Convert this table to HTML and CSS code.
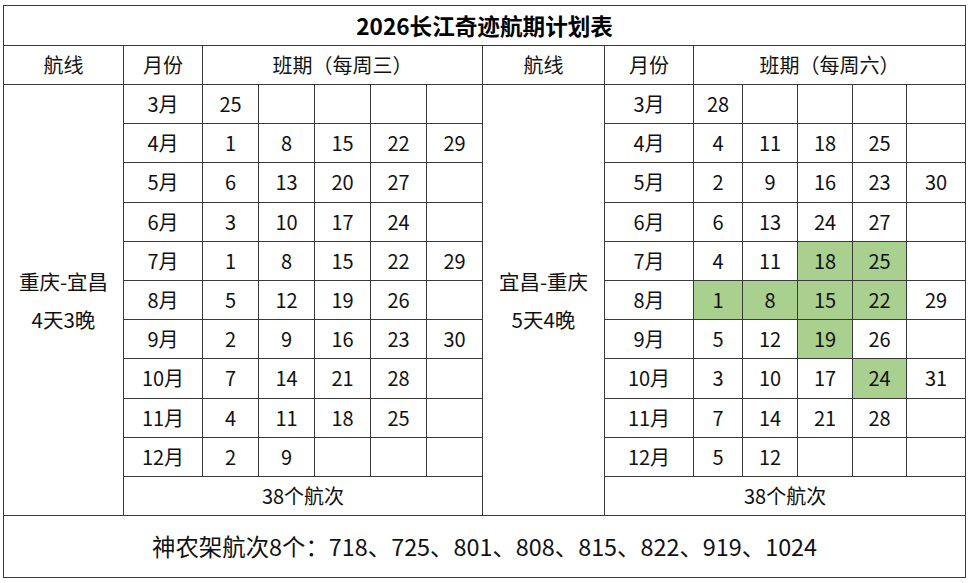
FILE: index.html
```html
<!DOCTYPE html>
<html lang="zh-CN">
<head>
<meta charset="utf-8">
<title>2026长江奇迹航期计划表</title>
<link rel="stylesheet" href="styles.css">
</head>
<body>
<table class="plan">
  <colgroup>
    <col class="c-route"><col class="c-month-l"><col class="c-d"><col class="c-d"><col class="c-d"><col class="c-d"><col class="c-d">
    <col class="c-route-r"><col class="c-month-r"><col class="c-r1"><col class="c-r2"><col class="c-r3"><col class="c-r4"><col class="c-r5">
  </colgroup>
  <tr class="r-title"><td colspan="14" class="title">2026长江奇迹航期计划表</td></tr>
  <tr class="r-head">
    <td>航线</td><td>月份</td><td colspan="5">班期（每周三）</td>
    <td>航线</td><td>月份</td><td colspan="5">班期（每周六）</td>
  </tr>
  <tr class="r-m">
    <td rowspan="11" class="route">重庆-宜昌<br>4天3晚</td>
    <td>3月</td><td>25</td><td></td><td></td><td></td><td></td>
    <td rowspan="11" class="route">宜昌-重庆<br>5天4晚</td>
    <td>3月</td><td>28</td><td></td><td></td><td></td><td></td>
  </tr>
  <tr class="r-m">
    <td>4月</td><td>1</td><td>8</td><td>15</td><td>22</td><td>29</td>
    <td>4月</td><td>4</td><td>11</td><td>18</td><td>25</td><td></td>
  </tr>
  <tr class="r-m">
    <td>5月</td><td>6</td><td>13</td><td>20</td><td>27</td><td></td>
    <td>5月</td><td>2</td><td>9</td><td>16</td><td>23</td><td>30</td>
  </tr>
  <tr class="r-m">
    <td>6月</td><td>3</td><td>10</td><td>17</td><td>24</td><td></td>
    <td>6月</td><td>6</td><td>13</td><td>24</td><td>27</td><td></td>
  </tr>
  <tr class="r-m">
    <td>7月</td><td>1</td><td>8</td><td>15</td><td>22</td><td>29</td>
    <td>7月</td><td>4</td><td>11</td><td class="hl">18</td><td class="hl">25</td><td></td>
  </tr>
  <tr class="r-m">
    <td>8月</td><td>5</td><td>12</td><td>19</td><td>26</td><td></td>
    <td>8月</td><td class="hl">1</td><td class="hl">8</td><td class="hl">15</td><td class="hl">22</td><td>29</td>
  </tr>
  <tr class="r-m">
    <td>9月</td><td>2</td><td>9</td><td>16</td><td>23</td><td>30</td>
    <td>9月</td><td>5</td><td>12</td><td class="hl">19</td><td>26</td><td></td>
  </tr>
  <tr class="r-m">
    <td>10月</td><td>7</td><td>14</td><td>21</td><td>28</td><td></td>
    <td>10月</td><td>3</td><td>10</td><td>17</td><td class="hl">24</td><td>31</td>
  </tr>
  <tr class="r-m">
    <td>11月</td><td>4</td><td>11</td><td>18</td><td>25</td><td></td>
    <td>11月</td><td>7</td><td>14</td><td>21</td><td>28</td><td></td>
  </tr>
  <tr class="r-m">
    <td>12月</td><td>2</td><td>9</td><td></td><td></td><td></td>
    <td>12月</td><td>5</td><td>12</td><td></td><td></td><td></td>
  </tr>
  <tr class="r-sum">
    <td colspan="6">38个航次</td>
    <td colspan="6">38个航次</td>
  </tr>
  <tr class="r-foot">
    <td colspan="14" class="foot">神农架航次8个：718、725、801、808、815、822、919、1024</td>
  </tr>
</table>
</body>
</html>
```
FILE: styles.css
```css
html, body {
  margin: 0;
  padding: 0;
  background: #ffffff;
}

body {
  padding: 5px 0 0 3px;
  font-family: "Noto Sans CJK SC", "Noto Sans", sans-serif;
  color: #111111;
}

.plan {
  border-collapse: collapse;
  table-layout: fixed;
  width: 962px;
}

.plan td {
  border: 1px solid #3a3a3a;
  padding: 0;
  text-align: center;
  vertical-align: middle;
  font-size: 20px;
  line-height: 24px;
  white-space: nowrap;
  overflow: hidden;
}

.c-route { width: 120px; }
.c-month-l { width: 79px; }
.c-d { width: 56px; }
.c-route-r { width: 122px; }
.c-month-r { width: 89px; }
.c-r1 { width: 49px; }
.c-r2 { width: 55px; }
.c-r3 { width: 55px; }
.c-r4 { width: 54px; }
.c-r5 { width: 59px; }

.r-title { height: 40px; }
.r-head { height: 39px; }
.r-m { height: 39.2px; }
.r-sum { height: 39px; }
.r-foot { height: 62px; }

.plan td.title {
  font-size: 22.6px;
  font-weight: bold;
  color: #000000;
}

.plan td.route {
  line-height: 38px;
  font-size: 20.5px;
}

.plan td.hl {
  background: #a9d08e;
}

.plan td.foot {
  font-size: 23.4px;
}
```
